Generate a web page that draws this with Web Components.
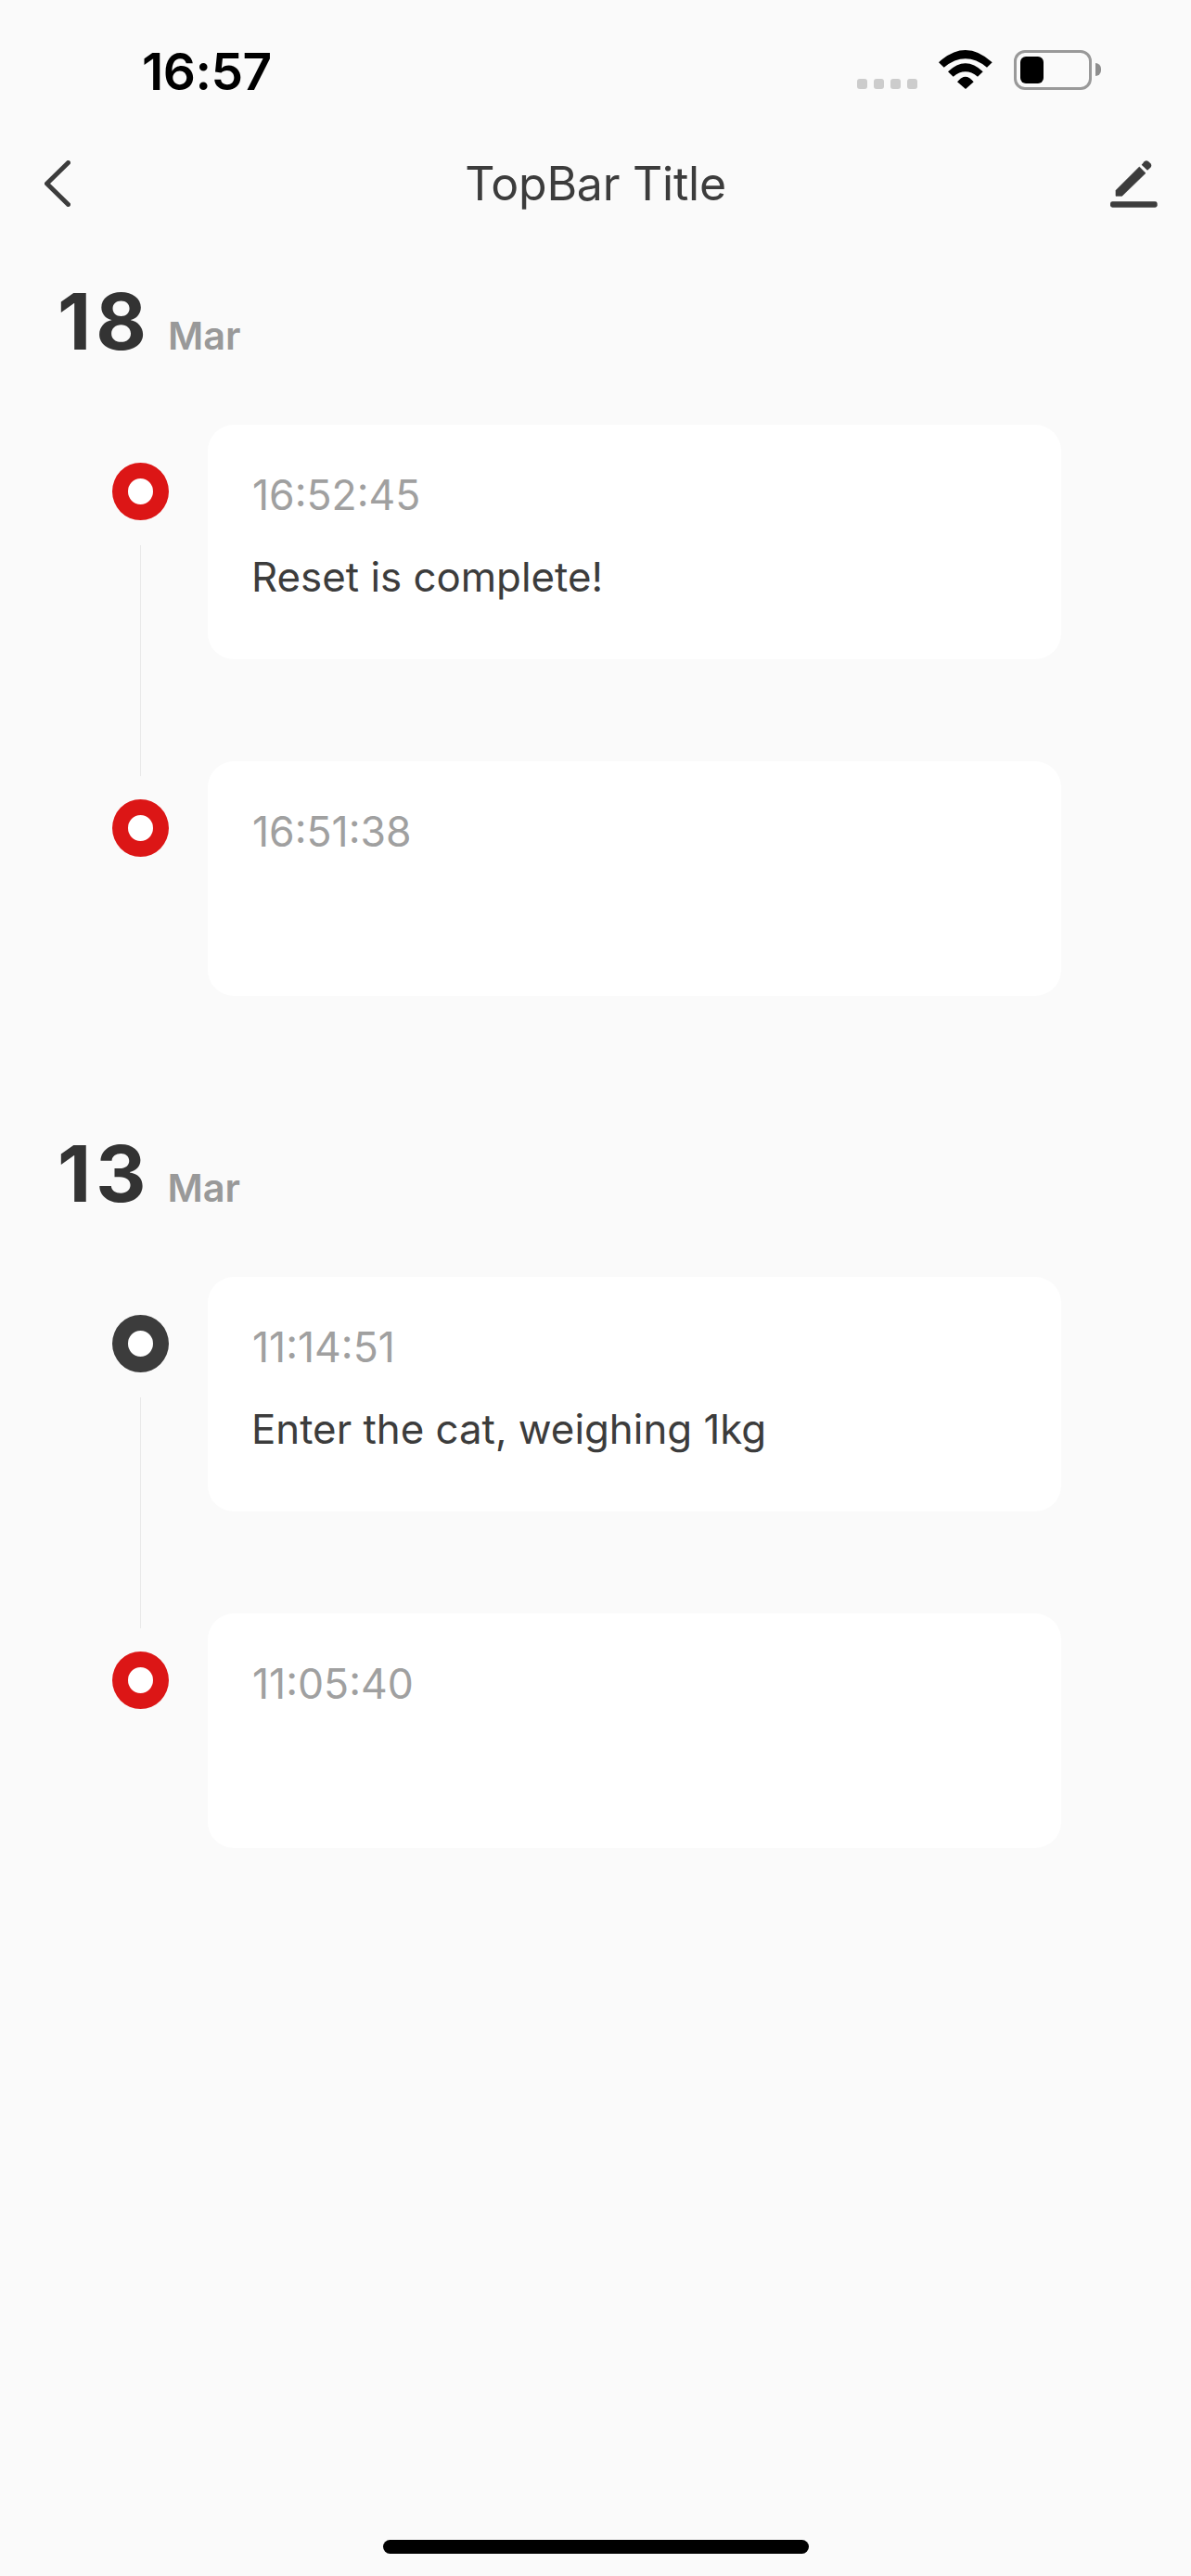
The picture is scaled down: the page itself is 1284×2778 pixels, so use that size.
<!DOCTYPE html>
<html>
<head>
<meta charset="utf-8">
<style>
	html, body { margin: 0; padding: 0; background: #fafafa; }
	body { font-family: Inter, "Noto Sans", sans-serif; color: #3c3c3c; }
</style>
</head>
<body>
<app-page>
	<status-bar time="16:57"></status-bar>
	<top-bar>TopBar Title</top-bar>

	<date-group day="18" month="Mar">
		<log-item time="16:52:45" line>Reset is complete!</log-item>
		<log-item time="16:51:38"></log-item>
	</date-group>

	<date-group day="13" month="Mar">
		<log-item time="11:14:51" kind="dark" line>Enter the cat, weighing 1kg</log-item>
		<log-item time="11:05:40"></log-item>
	</date-group>

	<home-bar></home-bar>
</app-page>

<script>
class AppPage extends HTMLElement {
	constructor() {
		super();
		this.attachShadow({ mode: "open" });
		this.shadowRoot.innerHTML = `
			<style>
			:host { display: flex; flex-direction: column; width: 1284px; height: 2778px; background: #fafafa; overflow: hidden; }
			</style>
			<slot></slot>
		`;
	}
}

class StatusBar extends HTMLElement {
	constructor() {
		super();
		this.attachShadow({ mode: "open" });
		this.shadowRoot.innerHTML = `
			<style>
			:host { display: flex; justify-content: space-between; height: 130px; box-sizing: border-box; padding: 0 97px 0 153px; }
			.time { font-size: 55px; font-weight: 600; line-height: 54px; color: #000; margin-top: 50px; letter-spacing: -.5px; }
			.right { display: flex; align-items: flex-start; padding-top: 54px; }
			.dots { display: flex; gap: 7px; margin-top: 31px; margin-right: 23px; }
			.dots i { width: 11px; height: 11px; border-radius: 3px; background: #ccc; }
			.wifi { width: 58px; height: 42px; margin-right: 23px; }
			.battery { box-sizing: border-box; width: 84px; height: 43px; border: 3.5px solid #999; border-radius: 12px; padding: 3.5px; }
			.battery i { display: block; width: 25px; height: 29px; background: #000; border-radius: 6px; }
			.nub { width: 6px; height: 14px; margin: 14px 0 0 4px; background: #8e8e8e; border-radius: 0 7px 7px 0; }
			</style>
			<div class="time"></div>
			<div class="right">
				<div class="dots"><i></i><i></i><i></i><i></i></div>
				<svg class="wifi" viewBox="0 0 58 42">
					<path d="M0 13.3Q28.8 -13.3 57.7 13.3L52 18.7Q28.8 -.1 5.7 18.7Z"/>
					<path d="M10 23.3Q28.8 5.3 47.7 23.3L42 28.7Q28.8 17.9 15.7 28.7Z"/>
					<path d="M20 34.3Q28.8 23.1 37.7 34.3L29 42Z"/>
				</svg>
				<div class="battery"><i></i></div>
				<div class="nub"></div>
			</div>
		`;
		this.shadowRoot.querySelector(".time").textContent = this.getAttribute("time");
	}
}

class TopBar extends HTMLElement {
	constructor() {
		super();
		this.attachShadow({ mode: "open" });
		this.shadowRoot.innerHTML = `
			<style>
			:host { display: grid; grid-template-columns: 1fr auto 1fr; align-items: center; height: 136px; box-sizing: border-box; padding: 0 36px; }
			.title { font-size: 50px; line-height: 64px; font-weight: 400; color: #3c3c3c; margin-top: -1px; letter-spacing: -.25px; }
			.back { width: 28px; height: 50px; margin-left: 12px; }
			.edit { justify-self: end; width: 57px; height: 57px; margin: 1px -2px 0 0; }
			</style>
			<svg class="back" viewBox="0 0 28 50">
				<path d="M25.5 2.5L2.5 25L25.5 47.5" fill="none" stroke="#3c3c3c" stroke-width="5" stroke-linecap="round" stroke-linejoin="round"/>
			</svg>
			<div class="title"><slot></slot></div>
			<svg class="edit" viewBox="1000 450 171 171" fill="#3c3c3c">
				<path d="M1030 556L1106 480L1126 500L1050 574H1030Z" stroke="#3c3c3c" stroke-width="2" stroke-linejoin="round"/>
				<path d="M1113 473L1122 463Q1128 457 1135 462L1142 469Q1148 476 1142 482L1132 491Z"/>
				<rect x="1012" y="592" width="152" height="19" rx="7"/>
			</svg>
		`;
	}
}

class DateGroup extends HTMLElement {
	constructor() {
		super();
		this.attachShadow({ mode: "open" });
		this.shadowRoot.innerHTML = `
			<style>
			:host { display: block; height: 919px; }
			.head { display: flex; align-items: baseline; gap: 18px; padding: 33px 0 0 62px; height: 192px; box-sizing: border-box; }
			.day { font-size: 84px; line-height: 96px; font-weight: 700; color: #333; letter-spacing: 5px; }
			.month { font-size: 41.5px; font-weight: 600; color: #999; }
			</style>
			<div class="head">
				<span class="day"></span>
				<span class="month"></span>
			</div>
			<div class="items"><slot></slot></div>
		`;
		this.shadowRoot.querySelector(".day").textContent = this.getAttribute("day");
		this.shadowRoot.querySelector(".month").textContent = this.getAttribute("month");
	}
}

class LogItem extends HTMLElement {
	constructor() {
		super();
		this.attachShadow({ mode: "open" });
		this.shadowRoot.innerHTML = `
			<style>
			:host { display: flex; height: 363px; padding-left: 121px; gap: 42px; }
			.rail { width: 61px; display: flex; flex-direction: column; align-items: center; }
			.dot { box-sizing: border-box; width: 61px; height: 62px; margin-top: 41px; border-radius: 50%; border: 17px solid #dc1616; background: #fff; flex: none; }
			:host([kind="dark"]) .dot { border-color: #3c3c3c; }
			.line { display: none; width: 1px; flex: 1; margin: 27px 0 -16px; background: #e8e8e8; }
			:host([line]) .line { display: block; }
			.card { box-sizing: border-box; width: 920px; height: 253px; background: #fff; border-radius: 28px; padding: 48px 47px 0; }
			.time { font-size: 44.5px; line-height: 56px; color: #a0a0a0; margin-left: 1px; }
			.text { font-size: 43.8px; line-height: 56px; margin-top: 33px; color: #3c3c3c; }
			</style>
			<div class="rail"><div class="dot"></div><div class="line"></div></div>
			<div class="card">
				<div class="time"></div>
				<div class="text"><slot></slot></div>
			</div>
		`;
		this.shadowRoot.querySelector(".time").textContent = this.getAttribute("time");
	}
}

class HomeBar extends HTMLElement {
	constructor() {
		super();
		this.attachShadow({ mode: "open" });
		this.shadowRoot.innerHTML = `
			<style>
			:host { display: flex; justify-content: center; margin-top: auto; padding-bottom: 24px; }
			div { width: 459px; height: 15px; border-radius: 8px; background: #000; }
			</style>
			<div></div>
		`;
	}
}

customElements.define("app-page", AppPage);
customElements.define("status-bar", StatusBar);
customElements.define("top-bar", TopBar);
customElements.define("date-group", DateGroup);
customElements.define("log-item", LogItem);
customElements.define("home-bar", HomeBar);
</script>
</body>
</html>
